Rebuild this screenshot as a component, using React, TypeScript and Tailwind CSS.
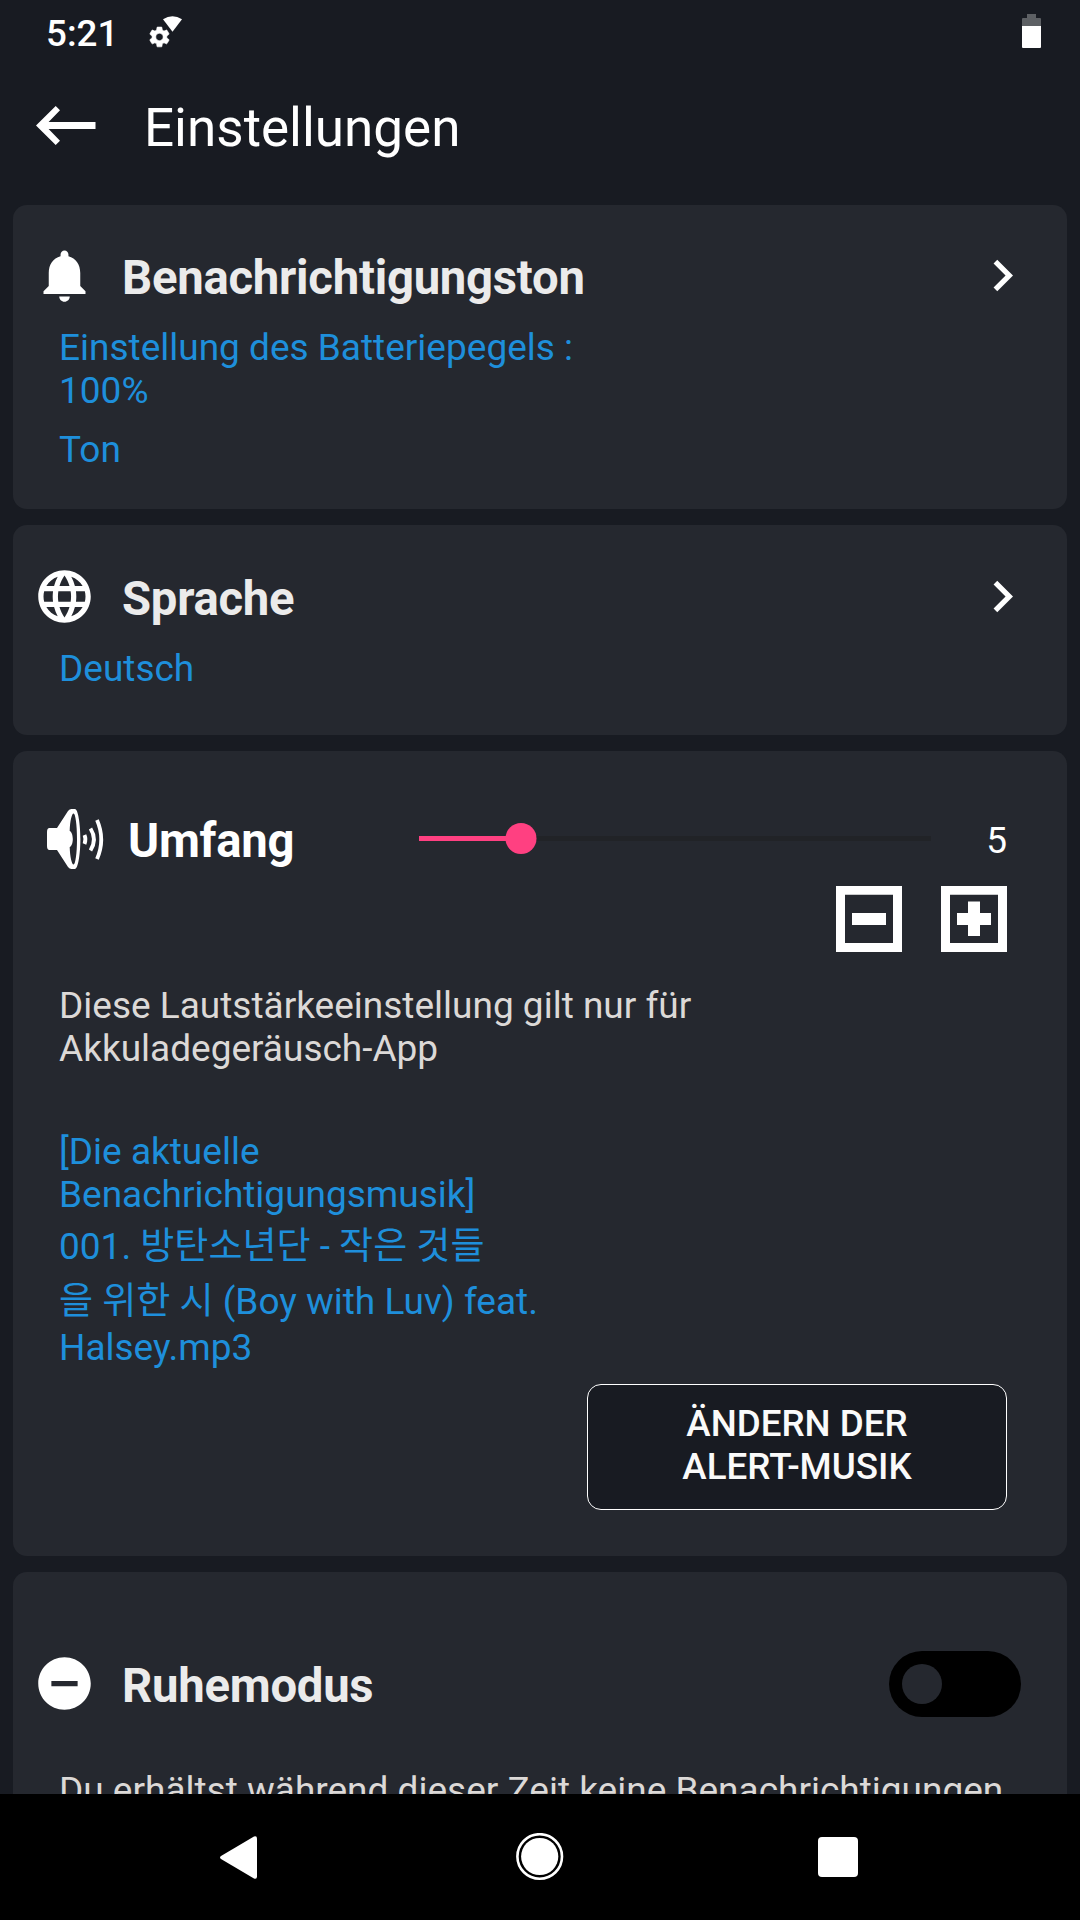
import type { ReactNode } from 'react';
import { useState } from 'react';

const BELL =
  'M12 22c1.1 0 2-.9 2-2h-4c0 1.1.89 2 2 2zm6-6v-5c0-3.07-1.64-5.64-4.5-6.32V4c0-.83-.67-1.5-1.5-1.5s-1.5.67-1.5 1.5v.68C7.63 5.36 6 7.92 6 11v5l-2 2v1h16v-1l-2-2z';
const GLOBE =
  'M11.99 2C6.47 2 2 6.48 2 12s4.47 10 9.99 10C17.52 22 22 17.52 22 12S17.52 2 11.99 2zm6.93 6h-2.95c-.32-1.25-.78-2.45-1.38-3.56 1.84.63 3.37 1.91 4.33 3.56zM12 4.04c.83 1.2 1.48 2.53 1.91 3.96h-3.82c.43-1.43 1.08-2.76 1.91-3.96zM4.26 14C4.1 13.36 4 12.69 4 12s.1-1.36.26-2h3.38c-.08.66-.14 1.32-.14 2 0 .68.06 1.34.14 2H4.26zm.82 2h2.95c.32 1.25.78 2.45 1.38 3.56-1.84-.63-3.37-1.9-4.33-3.56zm2.95-8H5.08c.96-1.66 2.49-2.93 4.33-3.56C8.81 5.55 8.35 6.75 8.03 8zM12 19.96c-.83-1.2-1.48-2.53-1.91-3.96h3.82c-.43 1.43-1.08 2.76-1.91 3.96zM14.34 14H9.66c-.09-.66-.16-1.32-.16-2 0-.68.07-1.35.16-2h4.68c.09.65.16 1.32.16 2 0 .68-.07 1.34-.16 2zm.25 5.56c.6-1.11 1.06-2.31 1.38-3.56h2.95c-.96 1.65-2.49 2.93-4.33 3.56zM16.36 14c.08-.66.14-1.32.14-2 0-.68-.06-1.34-.14-2h3.38c.16.64.26 1.31.26 2s-.1 1.36-.26 2h-3.38z';
const DO_NOT_DISTURB =
  'M12 2C6.48 2 2 6.48 2 12s4.48 10 10 10 10-4.48 10-10S17.52 2 12 2zm5 11H7v-2h10v2z';
const CHEVRON = 'M10 6L8.59 7.41 13.17 12l-4.58 4.59L10 18l6-6z';
const GEAR =
  'M19.14 12.94c.04-.3.06-.61.06-.94 0-.32-.02-.64-.07-.94l2.03-1.58c.18-.14.23-.41.12-.61l-1.92-3.32c-.12-.22-.37-.29-.59-.22l-2.39.96c-.5-.38-1.03-.7-1.62-.94l-.36-2.54c-.04-.24-.24-.41-.48-.41h-3.84c-.24 0-.43.17-.47.41l-.36 2.54c-.59.24-1.13.57-1.62.94l-2.39-.96c-.22-.08-.47 0-.59.22L2.74 8.87c-.12.21-.08.47.12.61l2.03 1.58c-.05.3-.09.63-.09.94s.02.64.07.94l-2.03 1.58c-.18.14-.23.41-.12.61l1.92 3.32c.12.22.37.29.59.22l2.39-.96c.5.38 1.03.7 1.62.94l.36 2.54c.05.24.24.41.48.41h3.84c.24 0 .44-.17.47-.41l.36-2.54c.59-.24 1.13-.56 1.62-.94l2.39.96c.22.08.47 0 .59-.22l1.92-3.32c.12-.22.07-.47-.12-.61l-2.01-1.58zM12 15.6c-1.98 0-3.6-1.62-3.6-3.6s1.62-3.6 3.6-3.6 3.6 1.62 3.6 3.6-1.62 3.6-3.6 3.6z';

function Icon({ d }: { d: string }) {
  return (
    <svg viewBox="0 0 24 24" className="h-[63px] w-[63px] shrink-0 fill-white" aria-hidden="true">
      <path d={d} />
    </svg>
  );
}

function SpeakerIcon() {
  return (
    <svg viewBox="0 0 70 76" className="h-[76px] w-[70px] shrink-0" aria-hidden="true">
      <path
        fill="#fff"
        fillRule="evenodd"
        d="M9.5 28H17L28 11Q29.500 9 31.500 9H35C38 9 40.400 24 40.400 39S38 69 35 69H31.500Q29.500 69 28 67L17 50H9.500Q7 50 7 46V32Q7 28 9.500 28ZM33.600 13.500C31.800 13.500 30 21 29.700 31C31.500 31.500 32.800 35 32.800 39S31.500 46.500 29.700 47C30 57 31.800 64.500 33.600 64.500C35.400 64.500 37 53 37 39S35.400 13.500 33.600 13.500Z"
      />
      <g fill="none" stroke="#fff" strokeWidth="3.8">
        <path d="M44.500 35Q46.400 39.400 44.500 44" />
        <path d="M50.500 28.500Q57.400 39.500 50.500 50.500" />
        <path d="M57 20Q65.500 39.500 57 59" />
      </g>
    </svg>
  );
}

function StatusBar() {
  return (
    <div className="flex h-16 items-start pr-[39px] pl-[46px] text-white">
      <span className="mt-3 w-[94px] text-[36.75px] leading-[43px] font-medium">5:21</span>
      <svg viewBox="0 0 50 45" className="mt-2.5 h-[45px] w-[50px] fill-white" aria-hidden="true">
        <path transform="translate(7.1 14.6) scale(1.03)" stroke="#fff" strokeWidth="0.6" d={GEAR} />
        <path d="M23 9.3Q32.5 3 42 9.3L32.5 21.7Z" />
      </svg>
      <svg viewBox="0 0 19 34" className="mt-3.5 ml-auto h-[34px] w-[19px]" aria-hidden="true">
        <path fill="#5d6064" d="M5 0H14V4H18Q19 4 19 5V12H0V5Q0 4 1 4H5Z" />
        <path fill="#fff" d="M0 12H19V33Q19 34 18 34H1Q0 34 0 33Z" />
      </svg>
    </div>
  );
}

function Header() {
  return (
    <header className="flex h-[141px] items-start pl-9 text-white">
      <button type="button" aria-label="Zurück" className="mt-[42px]">
        <svg viewBox="0 0 60 39" className="h-[39px] w-[60px] fill-white">
          <path d="M0 19.5L19.7 0L24 4.3L12.6 16H59.5V23H12.6L24 34.7L19.7 39Z" />
        </svg>
      </button>
      <h1 className="mt-[33px] ml-12 text-[53px] leading-[62px]">Einstellungen</h1>
    </header>
  );
}

function Card({ className, children }: { className: string; children: ReactNode }) {
  return <section className={`shrink-0 rounded-[14px] bg-[#25282f] ${className}`}>{children}</section>;
}

function NavRow({ icon, title }: { icon: string; title: string }) {
  return (
    <div className="flex items-start pr-[33px] pl-5">
      <Icon d={icon} />
      <h2 className="mt-[7px] ml-[26px] flex-1 text-[47.25px] leading-[55px] font-bold tracking-[-0.25px] text-[#ebebeb]">
        {title}
      </h2>
      <Icon d={CHEVRON} />
    </div>
  );
}

function VolumeSlider({ value, max }: { value: number; max: number }) {
  const pct = `${(value / max) * 100}%`;
  return (
    <div className="relative mt-[23px] flex h-[31px] w-[512px] items-center">
      <div className="h-[5px] w-full bg-[#212327]">
        <div className="h-full bg-[#ff4081]" style={{ width: pct }} />
      </div>
      <div className="absolute h-[31px] w-[31px] -translate-x-1/2 rounded-full bg-[#ff4081]" style={{ left: pct }} />
    </div>
  );
}

function StepButton({ label, plus, onClick }: { label: string; plus?: boolean; onClick: () => void }) {
  return (
    <button type="button" aria-label={label} onClick={onClick}>
      <svg viewBox="0 0 66 66" className="h-[66px] w-[66px] fill-white">
        <path fillRule="evenodd" d="M0 0H66V66H0ZM9 8.7V57H57V8.7Z" />
        <path d="M16 27H50V39H16Z" />
        {plus ? <path d="M27 15.5H39V50H27Z" /> : null}
      </svg>
    </button>
  );
}

function NavigationBar() {
  return (
    <nav className="flex h-[126px] shrink-0 items-center bg-black pl-[220px]">
      <svg viewBox="0 0 37 43" className="h-[43px] w-[37px] fill-white" aria-hidden="true">
        <path d="M1 20L34 .5Q37 -.5 37 2.5V40.5Q37 43.5 34 42.5L1 23Q-1 21.5 1 20Z" />
      </svg>
      <svg viewBox="0 0 48 48" className="ml-[259px] h-12 w-12" aria-hidden="true">
        <circle cx="23.7" cy="23.5" r="22.3" fill="none" stroke="#fff" strokeWidth="2.6" />
        <circle cx="23.7" cy="23.5" r="18.6" fill="#fff" />
      </svg>
      <div className="ml-[254px] h-10 w-10 rounded-[4px] bg-white" />
    </nav>
  );
}

export default function App() {
  const [volume, setVolume] = useState(5);
  const maxVolume = 25;

  return (
    <div className="flex h-[1920px] w-[1080px] flex-col overflow-hidden bg-[#181b22] font-[Roboto,'Noto_Sans_CJK_KR',sans-serif]">
      <StatusBar />
      <Header />

      <main className="flex min-h-0 flex-1 flex-col gap-4 overflow-hidden px-[13px] text-[37px] leading-[43px] whitespace-nowrap">
        <Card className="h-[304px] pt-[39px]">
          <NavRow icon={BELL} title="Benachrichtigungston" />
          <div className="mt-[19px] pl-[46px] text-[#1e8fdb]">
            <p>
              Einstellung des Batteriepegels :<br />
              100%
            </p>
            <p className="mt-4">Ton</p>
          </div>
        </Card>

        <Card className="h-[210px] pt-10">
          <NavRow icon={GLOBE} title="Sprache" />
          <p className="mt-[19px] pl-[46px] text-[#1e8fdb]">Deutsch</p>
        </Card>

        <Card className="h-[805px] pt-[49px] pr-[60px]">
          <div className="flex items-start pl-[27px] text-white">
            <SpeakerIcon />
            <h2 className="mt-3.5 ml-[18px] w-[291px] text-[47.25px] leading-[55px] font-bold tracking-[-0.25px]">
              Umfang
            </h2>
            <VolumeSlider value={volume} max={maxVolume} />
            <span className="mt-[19px] flex-1 text-right">{volume}</span>
          </div>
          <div className="mt-2.5 flex h-[66px] justify-end gap-[39px]">
            <StepButton label="Leiser" onClick={() => setVolume((v) => Math.max(0, v - 1))} />
            <StepButton label="Lauter" plus onClick={() => setVolume((v) => Math.min(maxVolume, v + 1))} />
          </div>
          <p className="mt-8 pl-[46px] text-[#dcd9d7]">
            Diese Lautstärkeeinstellung gilt nur für
            <br />
            Akkuladegeräusch-App
          </p>
          <div className="mt-[60px] flex flex-col pl-[46px] text-[#1e8fdb]">
            <span>[Die aktuelle</span>
            <span>Benachrichtigungsmusik]</span>
            <span className="mt-[9px]">001. 방탄소년단 - 작은 것들</span>
            <span className="mt-3">을 위한 시 (Boy with Luv) feat.</span>
            <span className="mt-[3px]">Halsey.mp3</span>
          </div>
          <button
            type="button"
            className="mt-[15px] ml-auto flex h-[126px] w-[420px] justify-center rounded-[14px] border border-white bg-[#181b22] pt-[17px] text-center text-[36.75px] font-medium text-[#fafafa]"
          >
            ÄNDERN DER
            <br />
            ALERT-MUSIK
          </button>
        </Card>

        <Card className="h-[400px] pt-[79px]">
          <div className="flex h-[66px] items-start pr-[46px] pl-5">
            <div className="mt-px">
              <Icon d={DO_NOT_DISTURB} />
            </div>
            <h2 className="mt-2 ml-[26px] flex-1 text-[47.25px] leading-[55px] font-bold tracking-[-0.25px] text-[#ebebeb]">
              Ruhemodus
            </h2>
            <button
              type="button"
              role="switch"
              aria-checked="false"
              aria-label="Ruhemodus"
              className="flex h-[66px] w-[132px] items-center rounded-full bg-black pl-[13px]"
            >
              <span className="h-10 w-10 rounded-full bg-[#25282f]" />
            </button>
          </div>
          <p className="mt-[52px] pl-[46px] text-[#dcd9d7]">Du erhältst während dieser Zeit keine Benachrichtigungen</p>
        </Card>
      </main>

      <NavigationBar />
    </div>
  );
}
